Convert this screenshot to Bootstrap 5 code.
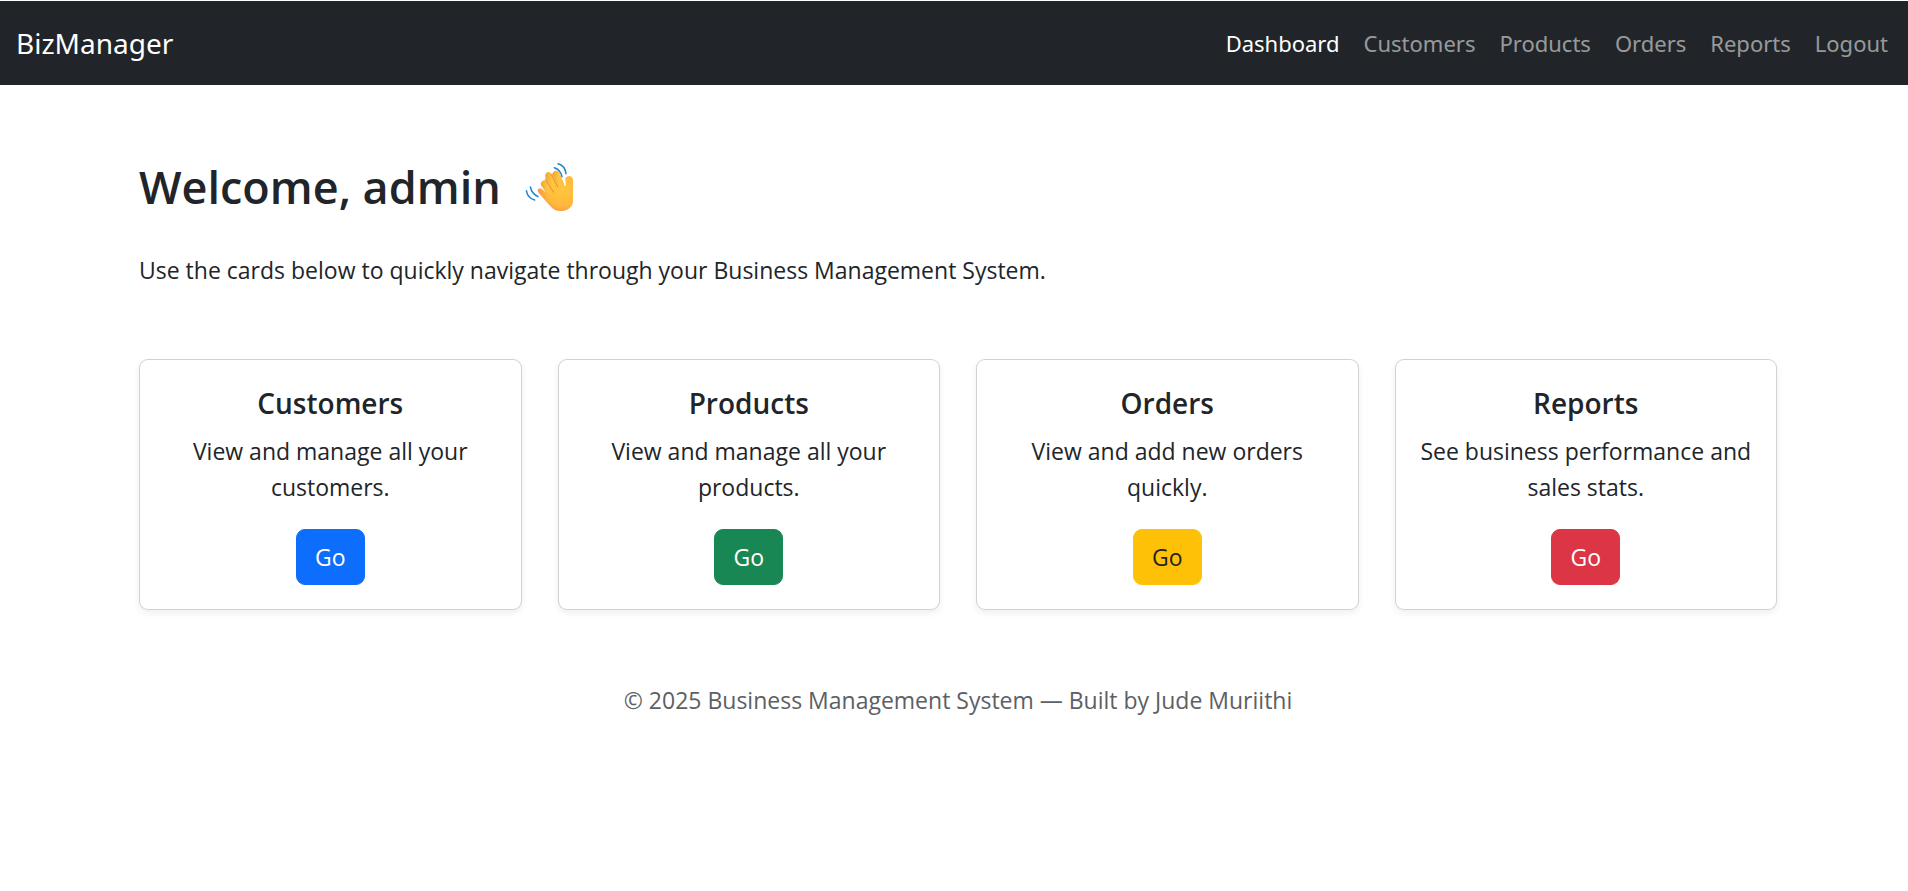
<!DOCTYPE html>
<html lang="en">
<head>
<meta charset="utf-8">
<meta name="viewport" content="width=device-width, initial-scale=1">
<title>BizManager - Dashboard</title>
<link rel="stylesheet" href="https://cdn.jsdelivr.net/npm/bootstrap@5.3.0/dist/css/bootstrap.min.css">
<style>
  html { font-size: 24px; }
  body {
    font-family: "Open Sans", "Noto Sans", sans-serif;
    font-size: 23px;
    line-height: 36px;
  }
  .topbar { margin-top: 1px; font-family: "Noto Sans", "Open Sans", sans-serif; font-size: 22px; }
  .topbar .container-fluid { padding-left: 16px; padding-right: 8px; }
  .topbar .navbar-brand { font-size: 28px; line-height: 45px; }
  .page { padding-left: 8px; }
  .page-inner { max-width: 1710px; padding: 73px 36px 0; }
  .welcome { font-size: 45px; line-height: 58px; font-weight: 600; }
  .wave { width: 48px; height: 50px; margin-left: 24px; }
  .cards { margin-top: 35px; --bs-gutter-x: 36px; --bs-gutter-y: 36px; }
  .cards .card-body { padding-top: 25px; }
  .cards .card-title { font-size: 28px; line-height: 36px; font-weight: 600; }
  .cards .btn { font-size: 23px; line-height: 36px; }
  .cards .btn-warning { --bs-btn-color: #212529; }
  .site-footer { margin-top: 72px; color: #5c6065; }
</style>
</head>
<body>
<nav class="navbar navbar-expand-lg navbar-dark bg-dark topbar">
  <div class="container-fluid">
    <a class="navbar-brand" href="#">BizManager</a>
    <button class="navbar-toggler" type="button" data-bs-toggle="collapse" data-bs-target="#mainNav" aria-controls="mainNav" aria-expanded="false" aria-label="Toggle navigation">
      <span class="navbar-toggler-icon"></span>
    </button>
    <div class="collapse navbar-collapse" id="mainNav">
      <ul class="navbar-nav ms-auto">
        <li class="nav-item"><a class="nav-link active" aria-current="page" href="#">Dashboard</a></li>
        <li class="nav-item"><a class="nav-link" href="#">Customers</a></li>
        <li class="nav-item"><a class="nav-link" href="#">Products</a></li>
        <li class="nav-item"><a class="nav-link" href="#">Orders</a></li>
        <li class="nav-item"><a class="nav-link" href="#">Reports</a></li>
        <li class="nav-item"><a class="nav-link" href="#">Logout</a></li>
      </ul>
    </div>
  </div>
</nav>

<div class="page">
  <main class="page-inner mx-auto">
    <h2 class="welcome d-flex align-items-center mb-4">Welcome, admin
      <svg class="wave" viewBox="40 38 144 150" role="img" aria-label="Waving hand">
        <defs>
          <radialGradient id="skin" gradientUnits="userSpaceOnUse" cx="152" cy="120" r="82">
            <stop offset="0" stop-color="#ffc83d"/>
            <stop offset=".6" stop-color="#ffb83c"/>
            <stop offset="1" stop-color="#f58a4c"/>
          </radialGradient>
          <linearGradient id="finger" x1="0" y1="0" x2="1" y2="0">
            <stop offset="0" stop-color="#f0a52f"/>
            <stop offset=".5" stop-color="#ffc544"/>
            <stop offset="1" stop-color="#ffbd38"/>
          </linearGradient>
        </defs>
        <path fill="url(#skin)" d="M80 119c5-4 10-1 14 3l8 7-13-20c-5-9 7-18 14-9l-1-2-1-14c-1-12 9-20 17-10l6-3c3-9 15-9 19 0l15 37c2 4 4 2 4-2l-1-14c-1-15 22-17 23 0v65c-3 19-20 29-40 28-15-1-23-9-32-19L82 132c-4-5-5-10-2-13z"/>
        <path fill="url(#finger)" d="M92 96c6-6 12-2 16 5l20 27-12 12-27-33c-3-4-1-8 3-11z"/>
        <path fill="url(#finger)" d="M105 70c6-5 13-1 16 6l19 38-13 12-24-44c-3-4-2-9 2-12z"/>
        <path fill="url(#finger)" d="M128 66c6-4 13-1 16 6l14 34-12 12-21-41c-2-4-1-8 3-11z"/>
        <g fill="none" stroke="#d98c28" stroke-width="2.5" stroke-linecap="round">
          <path d="M101 91l25 38M119 76l19 36"/>
        </g>
        <g fill="none" stroke="#1e88cf" stroke-width="4.5" stroke-linecap="round">
          <path d="M128 55c10 3 20 12 23 27M139 43c13 3 22 14 24 30"/>
          <path d="M56 113c3 13 10 23 23 29M44 124c3 15 11 25 25 28"/>
        </g>
      </svg>
    </h2>
    <p class="mb-0">Use the cards below to quickly navigate through your Business Management System.</p>

    <div class="row row-cols-1 row-cols-md-2 row-cols-xl-4 cards">
      <div class="col">
        <div class="card shadow-sm text-center h-100">
          <div class="card-body">
            <h5 class="card-title">Customers</h5>
            <p class="card-text mb-3">View and manage all your customers.</p>
            <a href="#" class="btn btn-primary">Go</a>
          </div>
        </div>
      </div>
      <div class="col">
        <div class="card shadow-sm text-center h-100">
          <div class="card-body">
            <h5 class="card-title">Products</h5>
            <p class="card-text mb-3">View and manage all your products.</p>
            <a href="#" class="btn btn-success">Go</a>
          </div>
        </div>
      </div>
      <div class="col">
        <div class="card shadow-sm text-center h-100">
          <div class="card-body">
            <h5 class="card-title">Orders</h5>
            <p class="card-text mb-3">View and add new orders quickly.</p>
            <a href="#" class="btn btn-warning">Go</a>
          </div>
        </div>
      </div>
      <div class="col">
        <div class="card shadow-sm text-center h-100">
          <div class="card-body">
            <h5 class="card-title">Reports</h5>
            <p class="card-text mb-3">See business performance and sales stats.</p>
            <a href="#" class="btn btn-danger">Go</a>
          </div>
        </div>
      </div>
    </div>

    <footer class="site-footer text-center">© 2025 Business Management System — Built by Jude Muriithi</footer>
  </main>
</div>
<script src="https://cdn.jsdelivr.net/npm/bootstrap@5.3.0/dist/js/bootstrap.bundle.min.js"></script>
</body>
</html>
